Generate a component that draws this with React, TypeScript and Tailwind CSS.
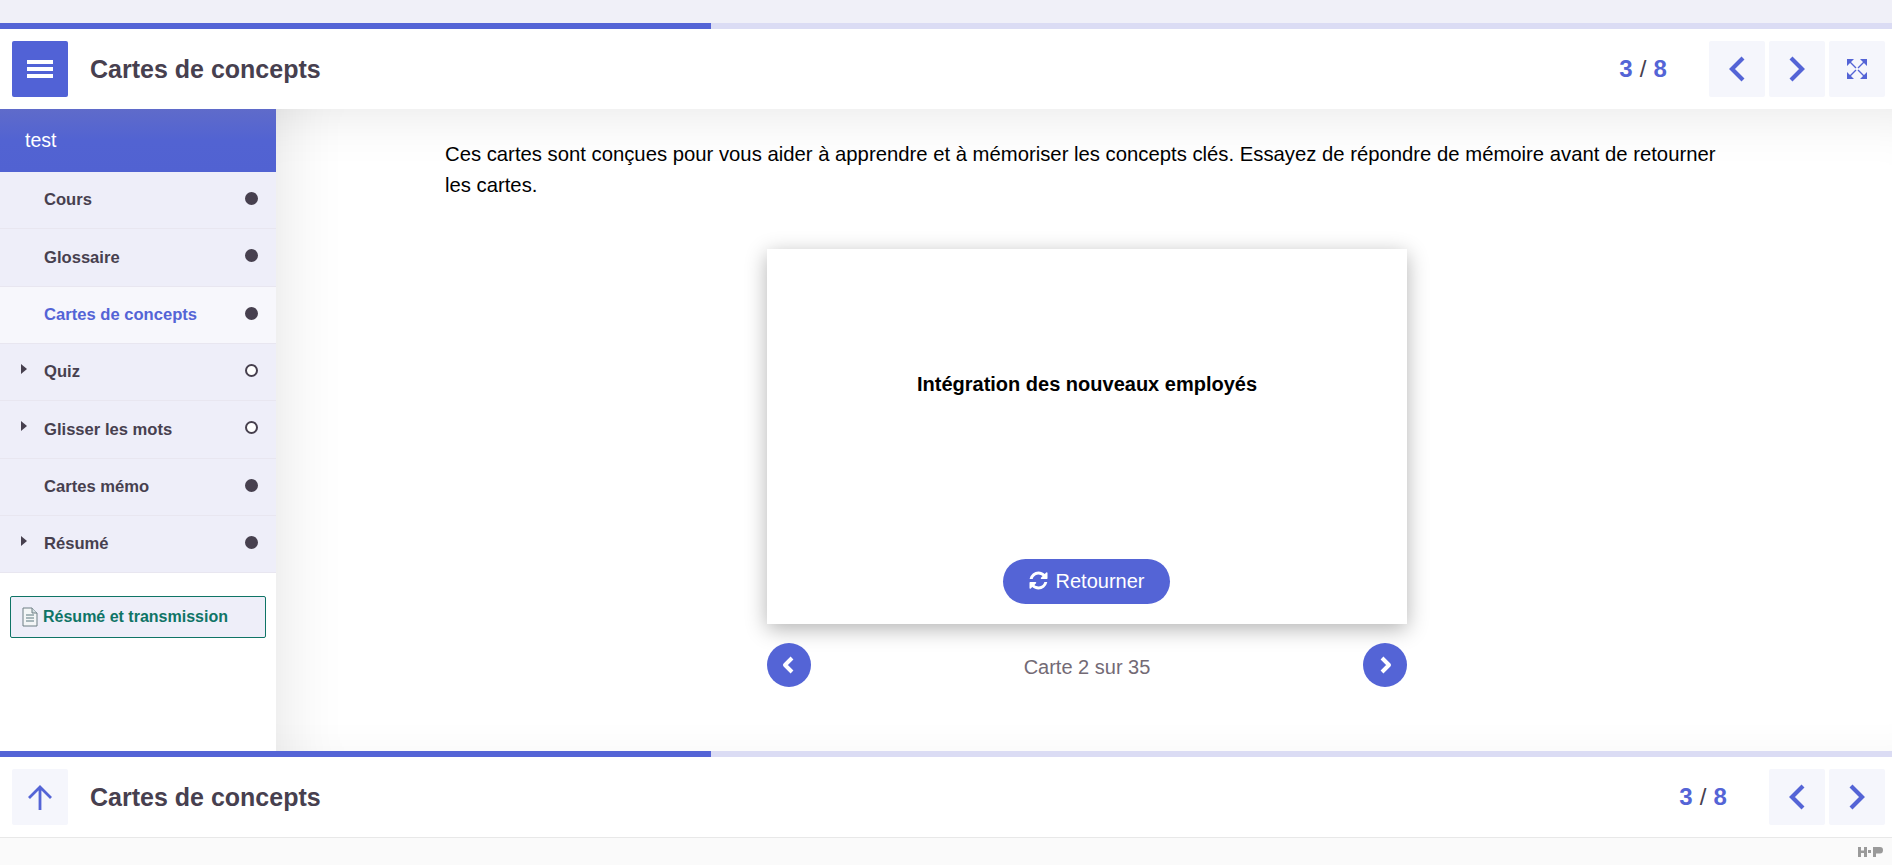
const font = "font-['Liberation_Sans',Arial,sans-serif]";

const items = [
  { label: "Cours", done: true },
  { label: "Glossaire", done: true },
  { label: "Cartes de concepts", done: true, active: true },
  { label: "Quiz", done: false, sub: true },
  { label: "Glisser les mots", done: false, sub: true },
  { label: "Cartes mémo", done: true },
  { label: "Résumé", done: true, sub: true },
];

function Chevron({ dir }: { dir: "left" | "right" }) {
  return (
    <svg width="20" height="26" viewBox="0 0 20 26" fill="none" stroke="#5464d6" strokeWidth="4.2">
      <path d={dir === "left" ? "M16 2 L5 13 L16 24" : "M4 2 L15 13 L4 24"} />
    </svg>
  );
}

function ExpandIcon() {
  return (
    <svg width="20" height="20" viewBox="0 0 20 20" fill="#5464d6" stroke="none">
      <path d="M0 0 H7 L0 7 Z M20 0 V7 L13 0 Z M0 20 V13 L7 20 Z M20 20 H13 L20 13 Z" />
      <path d="M3 3 L9 9 M17 3 L11 9 M3 17 L9 11 M17 17 L11 11" stroke="#5464d6" strokeWidth="1.4" />
    </svg>
  );
}

function RefreshIcon() {
  return (
    <svg width="21" height="21" viewBox="0 0 1792 1792" fill="currentColor" className="shrink-0">
      <path d="M1639 1056q0 5-1 7-64 268-268 434.5t-478 166.5q-146 0-282.5-55t-243.5-157l-129 129q-19 19-45 19t-45-19-19-45v-448q0-26 19-45t45-19h448q26 0 45 19t19 45-19 45l-137 137q71 66 161 102t187 36q134 0 250-65t186-179q11-17 53-117 8-23 30-23h192q13 0 22.5 9.5t9.5 22.5zm25-800v448q0 26-19 45t-45 19h-448q-26 0-45-19t-19-45 19-45l138-138q-148-137-349-137-134 0-250 65t-186 179q-11 17-53 117-8 23-30 23h-199q-13 0-22.5-9.5t-9.5-22.5v-7q65-268 270-434.5t480-166.5q146 0 284 55.5t245 156.5l130-129q19-19 45-19t45 19 19 45z" />
    </svg>
  );
}

function SquareButton({ children }: { children: React.ReactNode }) {
  return (
    <button className="w-14 h-14 rounded-[2px] bg-[#f5f6fc] flex items-center justify-center">
      {children}
    </button>
  );
}

function Counter() {
  return (
    <div className="text-[24px] font-bold text-[#5464d6] tracking-[0.2px]">
      3 <span className="font-normal text-[#47404f]">/</span> 8
    </div>
  );
}

function Progress() {
  return (
    <div className="h-1.5 bg-[#dbdcf4] shrink-0">
      <div className="h-full w-[711px] bg-[#5464d6]" />
    </div>
  );
}

function FileIcon() {
  return (
    <svg width="16" height="20" viewBox="0 0 16 20" className="shrink-0">
      <path d="M1 1 H10 L15 6 V19 H1 Z" fill="#f4f6f7" stroke="#6f7f85" strokeWidth="1" />
      <path d="M10 1 V6 H15" fill="#d5e0e3" stroke="#6f7f85" strokeWidth="1" />
      <path d="M4 8 H12 M4 11 H12 M4 14 H12" stroke="#8ea3a8" strokeWidth="1.4" />
    </svg>
  );
}

function Sidebar() {
  return (
    <aside className="w-[276px] shrink-0 bg-white z-10 flex flex-col">
      <div className="h-[63px] shrink-0 bg-gradient-to-b from-[#5f6bca] via-[#5263d2] to-[#5162d2] text-white text-[19.5px] flex items-center pl-[25px]">
        test
      </div>
      {items.map((it) => (
        <div
          key={it.label}
          className={`h-[57.33px] shrink-0 flex items-center pl-[44px] pr-[18px] border-b border-[#e8e6f0] relative text-[16.6px] font-bold ${
            it.active ? "bg-[#f7f7fc] text-[#5464d6]" : "bg-[#eeeef9] text-[#47404f]"
          }`}
        >
          {it.sub && (
            <span className="absolute left-[21px] top-[20px] w-0 h-0 border-y-[5.5px] border-y-transparent border-l-[6px] border-l-[#47404f]" />
          )}
          <span className="flex-1 mt-px">{it.label}</span>
          <span
            className={`w-[13px] h-[13px] rounded-full border-2 border-[#47404f] -mt-[3px] ${
              it.done ? "bg-[#47404f]" : "bg-white"
            }`}
          />
        </div>
      ))}
      <button className="mt-[23px] mx-[10px] h-[42px] shrink-0 rounded-[2px] border border-[#0f7466] bg-[#eeeef9] text-[#0f7466] text-[16px] font-bold flex items-center gap-[5px] pl-[11px]">
        <FileIcon />
        Résumé et transmission
      </button>
    </aside>
  );
}

function RoundNav({ dir }: { dir: "left" | "right" }) {
  return (
    <button className="w-11 h-11 rounded-full bg-[#5464d6] flex items-center justify-center">
      <svg
        width="14"
        height="18"
        viewBox="0 0 14 18"
        fill="none"
        stroke="#fff"
        strokeWidth="4"
        strokeLinejoin="round"
        className={dir === "left" ? "-ml-[2px]" : "ml-[2px]"}
      >
        <path d={dir === "left" ? "M11 2 L4 9 L11 16" : "M3 2 L10 9 L3 16"} />
      </svg>
    </button>
  );
}

function FlashCard() {
  return (
    <div className="w-[640px]">
      <div className="h-[375px] bg-white shadow-[0_5px_20px_rgba(0,0,0,0.3)] flex flex-col items-center">
        <div className="mt-[122px] text-black text-[20px] font-bold leading-[27px]">
          Intégration des nouveaux employés
        </div>
        <button className="mt-auto mb-[20px] mr-[2px] w-[167px] h-[45px] pb-[2px] rounded-full bg-[#5464d6] text-white text-[20px] flex items-center justify-center gap-[7px]">
          <RefreshIcon />
          Retourner
        </button>
      </div>
      <div className="mt-[19px] flex items-center justify-between">
        <RoundNav dir="left" />
        <span className="text-[20px] text-[#736a75] mt-[4px]">Carte 2 sur 35</span>
        <RoundNav dir="right" />
      </div>
    </div>
  );
}

export default function App() {
  return (
    <div className={`h-[865px] flex flex-col overflow-hidden bg-white ${font}`}>
      <div className="h-[23px] bg-[#f0f0f8] shrink-0" />
      <Progress />
      <header className="h-20 shrink-0 flex items-center pl-3 pr-[7px] bg-white z-10">
        <button className="w-14 h-14 rounded-[2px] bg-[#5162d6] flex flex-col items-center justify-center gap-[3px]">
          <span className="w-[26px] h-[4px] bg-white" />
          <span className="w-[26px] h-[4px] bg-white" />
          <span className="w-[26px] h-[4px] bg-white" />
        </button>
        <h1 className="ml-[22px] mt-[2px] flex-1 text-[25px] font-bold text-[#47404f]">Cartes de concepts</h1>
        <Counter />
        <div className="ml-[42px] flex gap-1">
          <SquareButton><Chevron dir="left" /></SquareButton>
          <SquareButton><Chevron dir="right" /></SquareButton>
          <SquareButton><ExpandIcon /></SquareButton>
        </div>
      </header>
      <div className="h-[642px] shrink-0 flex">
        <Sidebar />
        <main className="flex-1 relative shadow-[inset_70px_0_70px_-70px_rgba(0,0,0,0.12),inset_0_60px_60px_-60px_rgba(0,0,0,0.11),inset_0_-40px_40px_-40px_rgba(0,0,0,0.04)]">
          <div className="pt-[30px] pl-[169px] pr-[167px] text-[20.3px] leading-[31px] text-black">
            Ces cartes sont conçues pour vous aider à apprendre et à mémoriser les concepts clés. Essayez de répondre de mémoire avant de retourner les cartes.
          </div>
          <div className="mt-[48px] pl-[491px]">
            <FlashCard />
          </div>
        </main>
      </div>
      <Progress />
      <footer className="h-20 shrink-0 flex items-center pl-3 pr-[7px] bg-white">
        <SquareButton>
          <svg width="24" height="25" viewBox="0 0 24 25" fill="none" stroke="#5464d6" strokeWidth="2.8">
            <path d="M12 25 V2 M1 13 L12 2 L23 13" />
          </svg>
        </SquareButton>
        <h2 className="ml-[22px] mt-[2px] flex-1 text-[25px] font-bold text-[#47404f]">Cartes de concepts</h2>
        <Counter />
        <div className="ml-[42px] flex gap-1">
          <SquareButton><Chevron dir="left" /></SquareButton>
          <SquareButton><Chevron dir="right" /></SquareButton>
        </div>
      </footer>
      <div className="flex-1 bg-[#fafafa] border-t border-[#e8e8e8] flex justify-end pr-[9px] pt-[9px]">
        <svg width="25" height="10" viewBox="0 0 25 10" fill="#9a9a9a">
          <path d="M0 0 H3 V3.5 H6 V0 H9 V10 H6 V6 H3 V10 H0 Z" />
          <rect x="10" y="3" width="3" height="3" />
          <path d="M15 0 H22 Q25 0 25 3 Q25 6.5 22 6.5 H18 V10 H15 Z" />
        </svg>
      </div>
    </div>
  );
}
